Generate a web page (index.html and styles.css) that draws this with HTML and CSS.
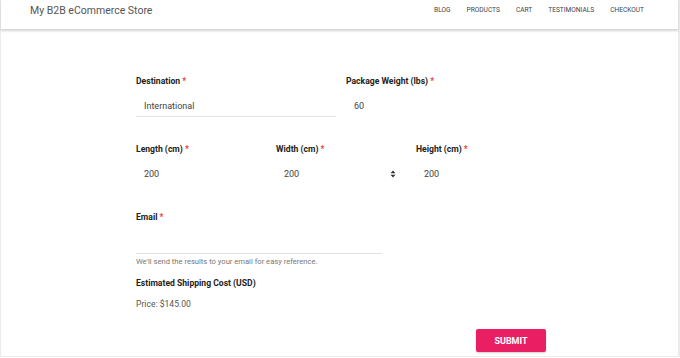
FILE: index.html
```html
<!DOCTYPE html>
<html lang="en">
<head>
    <meta charset="UTF-8" />
    <title>My B2B eCommerce Store</title>
    <link rel="stylesheet" href="styles.css">
</head>
<body>

<div class="page">

    <div class="site-header">
        <div class="logo">My B2B eCommerce Store</div>
        <nav class="menu">
            <a href="#">Blog</a>
            <a href="#">Products</a>
            <a href="#">Cart</a>
            <a href="#">Testimonials</a>
            <a href="#">Checkout</a>
        </nav>
    </div>

    <form class="calc-form">

        <div class="row cols-2">
            <div class="field">
                <label>Destination <span class="req">*</span></label>
                <div class="input line">International</div>
            </div>
            <div class="field">
                <label>Package Weight (lbs) <span class="req">*</span></label>
                <div class="input">60</div>
            </div>
        </div>

        <div class="row cols-3">
            <div class="field">
                <label>Length (cm) <span class="req">*</span></label>
                <div class="input">200</div>
            </div>
            <div class="field">
                <label>Width (cm) <span class="req">*</span></label>
                <div class="input spin">200
                    <svg class="spinner" width="6" height="8" viewBox="0 0 6 8">
                        <path d="M0.5 3.2 L3 0.6 L5.5 3.2 Z M0.5 4.8 L3 7.4 L5.5 4.8 Z" fill="#333"/>
                    </svg>
                </div>
            </div>
            <div class="field">
                <label>Height (cm) <span class="req">*</span></label>
                <div class="input">200</div>
            </div>
        </div>

        <div class="row last">
            <div class="field email">
                <label>Email <span class="req">*</span></label>
                <div class="input line tall"></div>
                <p class="hint">We'll send the results to your email for easy reference.</p>
            </div>
        </div>

        <div class="result">
            <h4>Estimated Shipping Cost (USD)</h4>
            <p>Price: $145.00</p>
        </div>

        <div class="actions">
            <button type="button" class="submit">Submit</button>
        </div>

    </form>

</div>

</body>
</html>
```

FILE: styles.css
```css
* {
    box-sizing: border-box;
}
body {
    margin: 0;
    background: #fff;
    font-family: Roboto, "Liberation Sans", sans-serif;
    color: #333;
}
.page {
    width: 680px;
    height: 357px;
    border-left: 1px solid #ebebeb;
    border-right: 2px solid #ebebeb;
    border-bottom: 1px solid #ebebeb;
}
.site-header {
    height: 30px;
    display: flex;
    align-items: center;
    justify-content: space-between;
    padding: 0 34px 0 29px;
    box-shadow: 0 1px 2px rgba(0, 0, 0, 0.18);
    border-bottom: 1px solid #dcdcdc;
}
.logo {
    font-size: 10.5px;
    color: #555;
    margin-top: -9px;
}
.menu {
    display: flex;
    gap: 16px;
    margin-top: -10px;
}
.menu a {
    font-size: 6.6px;
    color: #444;
    text-decoration: none;
    text-transform: uppercase;
}
.calc-form {
    width: 410px;
    margin-left: 135px;
    padding-top: 45px;
}
.row {
    display: grid;
    gap: 10px;
    margin-bottom: 26px;
}
.row.last {
    margin-bottom: 0;
}
.cols-2 {
    grid-template-columns: 1fr 1fr;
}
.cols-3 {
    grid-template-columns: 1fr 1fr 1fr;
}
.field label {
    display: block;
    font-size: 8.6px;
    font-weight: 700;
    line-height: 12px;
    color: #222;
    margin-bottom: 8px;
}
.req {
    color: #e53935;
}
.input {
    height: 22px;
    line-height: 22px;
    padding-left: 8px;
    font-size: 9px;
    color: #444;
}
.input.line {
    border-bottom: 1px solid #e2e2e2;
}
.input.tall {
    height: 23px;
}
.spin {
    position: relative;
}
.spinner {
    position: absolute;
    right: 10px;
    top: 7px;
}
.email {
    width: 246px;
}
.hint {
    margin: 3px 0 0;
    font-size: 7.6px;
    line-height: 10px;
    color: #777;
}
.result h4 {
    margin: 10px 0 9px;
    font-size: 8.6px;
    line-height: 12px;
    color: #222;
}
.result p {
    margin: 0;
    font-size: 8.6px;
    line-height: 12px;
    color: #555;
}
.actions {
    display: flex;
    justify-content: flex-end;
    margin-top: 19px;
}
.submit {
    width: 70px;
    height: 23px;
    border: none;
    border-radius: 2px;
    background: #e91e63;
    color: #fff;
    font-family: Roboto, "Liberation Sans", sans-serif;
    font-size: 9px;
    font-weight: 700;
    text-transform: uppercase;
    box-shadow: 0 1px 2px rgba(0, 0, 0, 0.2);
}
```
